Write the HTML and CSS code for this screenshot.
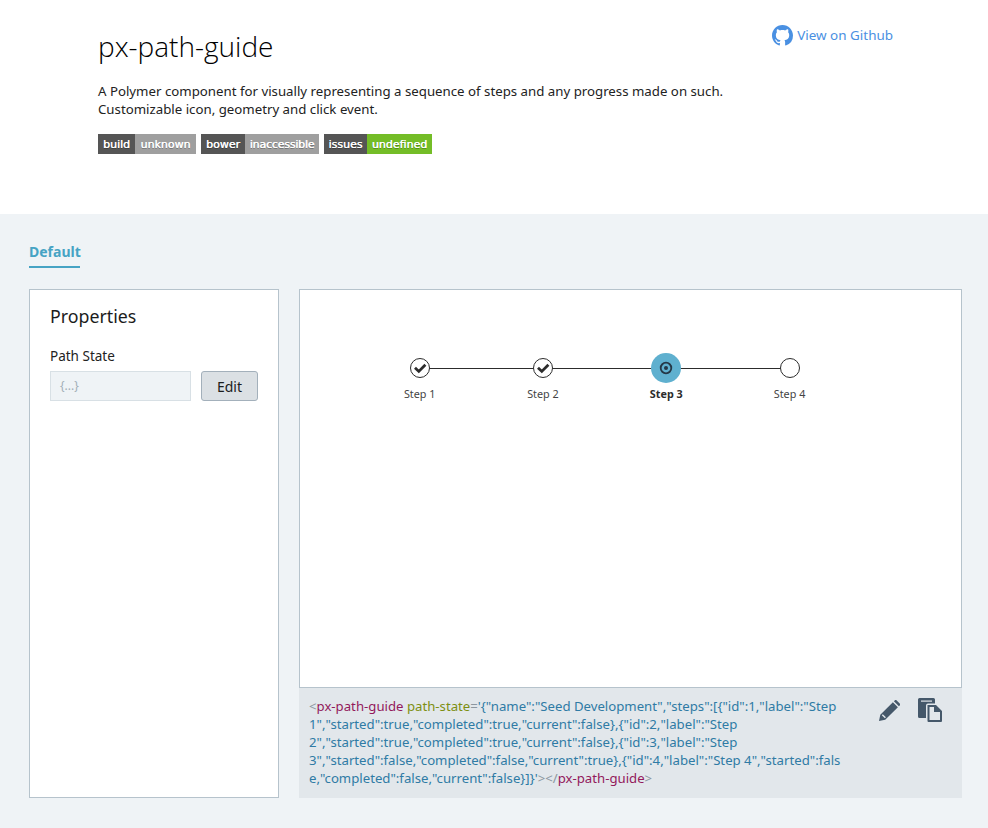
FILE: index.html
```html
<!DOCTYPE html>
<html lang="en">
<head>
<meta charset="utf-8">
<title>px-path-guide</title>
<link rel="stylesheet" href="styles.css">
</head>
<body>
<header class="hero">
  <div class="hero-main">
    <h1 class="title">px-path-guide</h1>
    <p class="desc">A Polymer component for visually representing a sequence of steps and any progress made on such.<br>Customizable icon, geometry and click event.</p>
    <div class="badges">
      <span class="badge"><span class="badge-k w37">build</span><span class="badge-v w61">unknown</span></span>
      <span class="badge"><span class="badge-k w44">bower</span><span class="badge-v w74">inaccessible</span></span>
      <span class="badge"><span class="badge-k w43">issues</span><span class="badge-v badge-green w65">undefined</span></span>
    </div>
  </div>
  <a class="gh-link" href="#">
    <svg class="gh-icon" viewBox="0 0 16 16" width="21" height="21"><path fill="#4a90e2" d="M8 0C3.58 0 0 3.58 0 8c0 3.54 2.29 6.53 5.47 7.59.4.07.55-.17.55-.38 0-.19-.01-.82-.01-1.49-2.01.37-2.53-.49-2.69-.94-.09-.23-.48-.94-.82-1.13-.28-.15-.68-.52-.01-.53.63-.01 1.08.58 1.23.82.72 1.21 1.87.87 2.33.66.07-.52.28-.87.51-1.07-1.78-.2-3.64-.89-3.64-3.95 0-.87.31-1.59.82-2.15-.08-.2-.36-1.02.08-2.12 0 0 .67-.21 2.2.82.64-.18 1.32-.27 2-.27s1.36.09 2 .27c1.53-1.04 2.2-.82 2.2-.82.44 1.1.16 1.92.08 2.12.51.56.82 1.27.82 2.15 0 3.07-1.87 3.75-3.65 3.95.29.25.54.73.54 1.48 0 1.07-.01 1.93-.01 2.2 0 .21.15.46.55.38A8.013 8.013 0 0 0 16 8c0-4.42-3.58-8-8-8z"/></svg>
    <span>View on Github</span>
  </a>
</header>
<main class="content">
  <nav class="tabs"><span class="tab">Default</span></nav>
  <div class="layout">
    <aside class="props">
      <h2 class="props-title">Properties</h2>
      <label class="field-label">Path State</label>
      <div class="field-row">
        <div class="field-input">{...}</div>
        <button class="btn" type="button">Edit</button>
      </div>
    </aside>
    <section class="demo">
      <div class="stage">
        <div class="guide">
          <div class="guide-line"></div>
          <div class="step">
            <div class="node-slot"><div class="node"><svg viewBox="0 0 20 20" width="20" height="20"><path d="M5 9.800 8.800 13.400 15.400 6.800" fill="none" stroke="#2c2c2c" stroke-width="2.800"/></svg></div></div>
            <span class="step-label">Step 1</span>
          </div>
          <div class="step">
            <div class="node-slot"><div class="node"><svg viewBox="0 0 20 20" width="20" height="20"><path d="M5 9.800 8.800 13.400 15.400 6.800" fill="none" stroke="#2c2c2c" stroke-width="2.800"/></svg></div></div>
            <span class="step-label">Step 2</span>
          </div>
          <div class="step">
            <div class="node-slot"><div class="node node-current"><svg viewBox="0 0 14 14" width="14" height="14"><circle cx="7" cy="7" r="5.300" fill="none" stroke="#253746" stroke-width="1.800"/><circle cx="7" cy="7" r="2" fill="#253746"/></svg></div></div>
            <span class="step-label step-label-current">Step 3</span>
          </div>
          <div class="step">
            <div class="node-slot"><div class="node"></div></div>
            <span class="step-label">Step 4</span>
          </div>
        </div>
      </div>
      <div class="code-box">
        <code class="code"><span class="pun">&lt;</span><span class="tag">px-path-guide</span> <span class="atn">path-state</span><span class="pun">=</span><span class="atv">'{"name":"Seed Development","steps":[{"id":1,"label":"Step<br>1","started":true,"completed":true,"current":false},{"id":2,"label":"Step<br>2","started":true,"completed":true,"current":false},{"id":3,"label":"Step<br>3","started":false,"completed":false,"current":true},{"id":4,"label":"Step 4","started":fals<br>e,"completed":false,"current":false}]}'</span><span class="pun">&gt;&lt;/</span><span class="tag">px-path-guide</span><span class="pun">&gt;</span></code>
        <div class="code-tools">
          <svg class="tool-pencil" viewBox="0 0 21 21" width="21" height="21"><path fill="#45586a" d="M0 21l1.300-6.200L13.900 2.200l5 5L6.200 19.800zM2.800 15.200l3.100 3.100 1-1-3.100-3.100z"/><path fill="#45586a" d="M14.900 1.200l.8-.8a1.400 1.400 0 0 1 2 0l3 3a1.400 1.400 0 0 1 0 2l-.8.8z"/></svg>
          <svg class="tool-copy" viewBox="0 0 24 24" width="24" height="24"><path fill="#45586a" d="M0 1.500A1.500 1.500 0 0 1 1.500 0h14A1.500 1.500 0 0 1 17 1.500V5.500H10a2 2 0 0 0-2 2V20H1.500A1.500 1.500 0 0 1 0 18.500z"/><path fill="#e2e7eb" d="M3 2.500h11v1.200H3z"/><path fill="#45586a" d="M9.500 7h8.500l6 6v10a1 1 0 0 1-1 1H10.500a1 1 0 0 1-1-1zM11.500 9v13h10.500v-8h-6V9z"/></svg>
        </div>
      </div>
    </section>
  </div>
</main>
</body>
</html>
```
FILE: styles.css
```css
* { box-sizing: border-box; }
html, body { margin: 0; padding: 0; }
body {
  width: 988px;
  min-height: 828px;
  background: #eff3f6;
  color: #1c1c1c;
  font-family: "Noto Sans", "Open Sans", sans-serif;
}
.hero {
  height: 214px;
  background: #fff;
  padding: 0 95px 0 98px;
  display: flex;
  justify-content: space-between;
  align-items: flex-start;
}
.title {
  margin: 26px 0 0;
  font-family: "Open Sans", "Noto Sans", sans-serif;
  font-size: 28px;
  line-height: 40px;
  font-weight: 300;
  color: #000;
}
.desc {
  margin: 16px 0 0;
  font-size: 13.250px;
  line-height: 18px;
  color: #222;
}
.badges {
  display: flex;
  gap: 5px;
  margin-top: 16px;
}
.badge {
  display: flex;
  height: 20px;
  font-family: "DejaVu Sans", sans-serif;
  font-size: 11px;
  line-height: 21px;
  color: #fff;
  text-align: center;
  text-shadow: .3px 0 0 #fff, 0 1px 0 rgba(1, 1, 1, .3);
}
.badge-k { background: #555; }
.badge-v { background: #9f9f9f; }
.badge-green { background: #74bd27; }
.w37 { width: 37px; }
.w43 { width: 43px; }
.w44 { width: 44px; }
.w61 { width: 61px; }
.w65 { width: 65px; }
.w74 { width: 74px; letter-spacing: -.2px; }
.gh-link {
  display: flex;
  align-items: center;
  gap: 4px;
  margin-top: 25px;
  color: #4a90e2;
  font-size: 13.450px;
  line-height: 19px;
  text-decoration: none;
}
.content { padding: 0 26px 30px 29px; }
.tabs { display: flex; padding-top: 28px; }
.tab {
  color: #46a3c4;
  font-weight: 700;
  font-size: 14px;
  line-height: 19px;
  padding-bottom: 5px;
  border-bottom: 2px solid #46a3c4;
  width: 51px;
}
.layout {
  display: flex;
  gap: 20px;
  margin-top: 21px;
  height: 509px;
}
.props {
  width: 250px;
  background: #fff;
  border: 1px solid #b6c3cc;
  padding: 14px 20px;
}
.props-title {
  margin: 0;
  font-size: 17.800px;
  line-height: 24px;
  font-weight: 400;
}
.field-label {
  display: block;
  margin-top: 19px;
  font-size: 13.500px;
  line-height: 18px;
  color: #222;
}
.field-row {
  display: flex;
  gap: 10px;
  margin-top: 6px;
}
.field-input {
  width: 141px;
  height: 30px;
  background: #eff3f6;
  border: 1px solid #d8e0e5;
  padding-left: 9px;
  font-size: 12px;
  line-height: 28px;
  color: #a3afb8;
}
.btn {
  width: 57px;
  height: 30px;
  padding: 0;
  border: 1px solid #a3b0bb;
  border-radius: 3px;
  background: #dbe0e4;
  font-family: inherit;
  font-size: 14px;
  color: #1c1c1c;
}
.demo {
  flex: 1;
  display: flex;
  flex-direction: column;
}
.stage {
  height: 399px;
  background: #fff;
  border: 1px solid #b6c3cc;
  padding: 63px 0 0 58px;
}
.guide {
  position: relative;
  display: grid;
  grid-template-columns: repeat(4, 123.300px);
  width: 493.200px;
}
.guide-line {
  position: absolute;
  left: 61.650px;
  right: 61.650px;
  top: 15px;
  height: 1px;
  background: #2c2c2c;
}
.step {
  position: relative;
  display: flex;
  flex-direction: column;
  align-items: center;
}
.node-slot {
  height: 30px;
  display: flex;
  align-items: center;
}
.node {
  width: 20px;
  height: 20px;
  border: 1px solid #2c2c2c;
  border-radius: 50%;
  background: #fff;
  display: flex;
  align-items: center;
  justify-content: center;
}
.node svg { flex: none; }
.node-current {
  width: 30px;
  height: 30px;
  background: #5fb0cf;
  border: 0;
}
.step-label {
  margin-top: 3px;
  font-size: 10.800px;
  line-height: 16px;
  color: #444;
}
.step-label-current { font-weight: 700; color: #2c2c2c; }
.code-box {
  flex: 1;
  background: #e2e7eb;
  padding: 9px 20px 0 10px;
  display: flex;
  justify-content: space-between;
}
.code {
  display: block;
  font-family: "Noto Sans", "Open Sans", sans-serif;
  font-size: 13.200px;
  line-height: 18px;
  white-space: nowrap;
}
.pun { color: #8c979f; }
.tag { color: #93195c; }
.atn { color: #7d8f12; }
.atv { color: #2f7ba5; }
.code-tools {
  display: flex;
  gap: 18px;
  align-items: flex-start;
  padding-top: 1px;
}
.tool-pencil { margin-top: 2px; }
```
